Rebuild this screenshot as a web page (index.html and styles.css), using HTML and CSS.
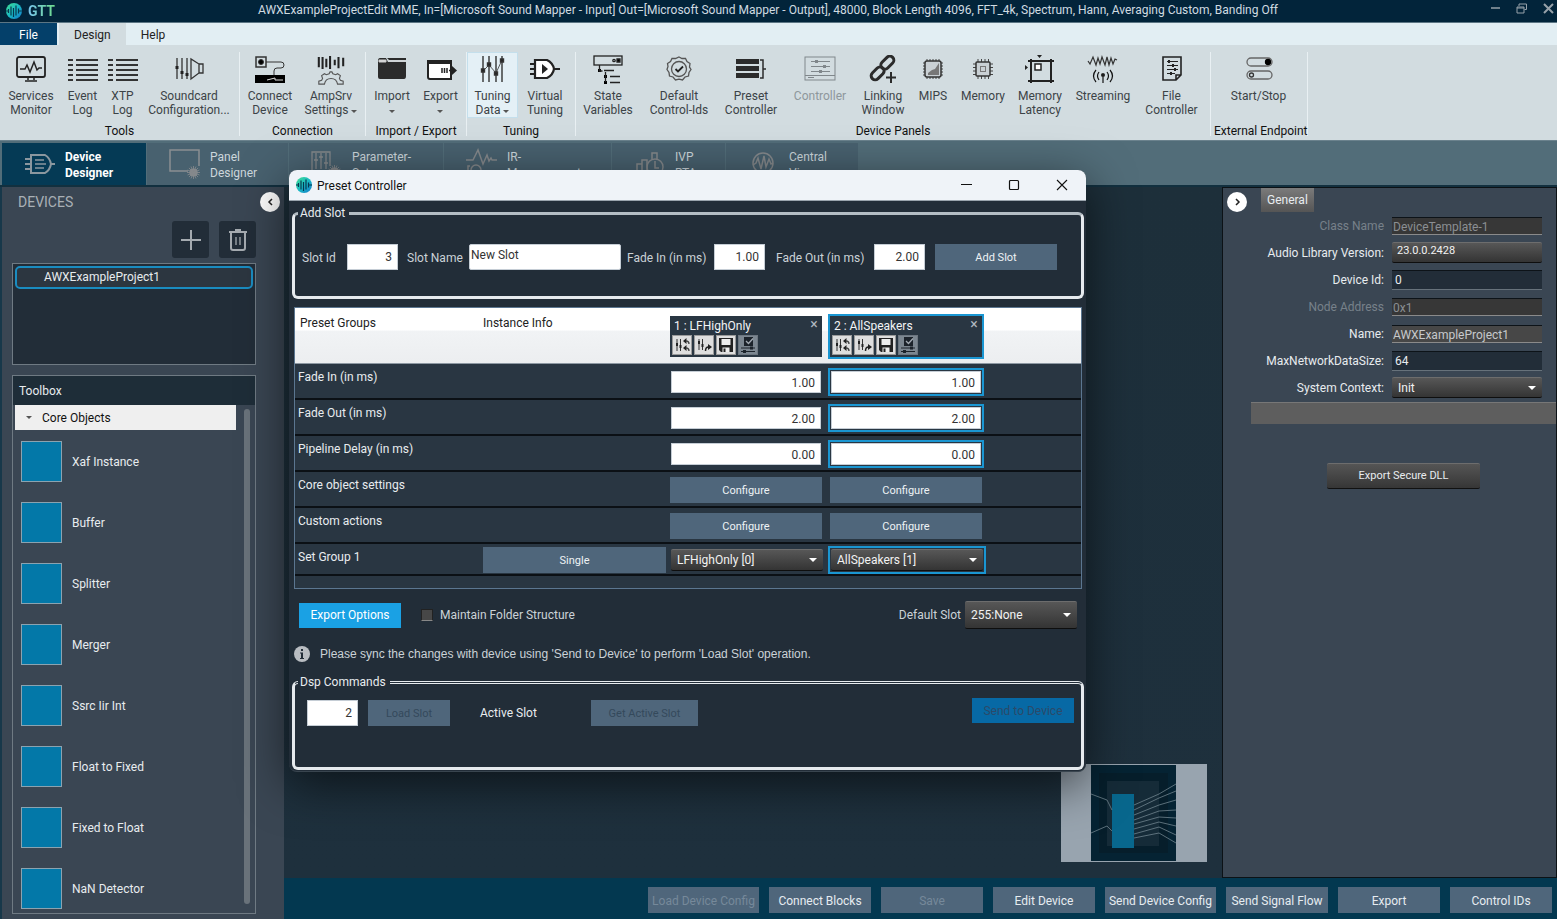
FILE: index.html
```
<!DOCTYPE html>
<html lang="en">
<head>
    <meta charset="UTF-8">
    <meta name="viewport" content="width=device-width, initial-scale=1.0">
    <title>GTT - Preset Controller</title>
    <link rel="stylesheet" href="styles.css">
</head>
<body>
    <!-- shared icons -->
    <svg class="defs" width="0" height="0" aria-hidden="true">
        <defs>
            <linearGradient id="logo-fill" x1="0" y1="0" x2="1" y2="1">
                <stop offset="0" stop-color="#43e08f"/>
                <stop offset="0.5" stop-color="#19b9c4"/>
                <stop offset="1" stop-color="#1277c8"/>
            </linearGradient>
            <symbol id="logo" viewBox="0 0 16 16">
                <circle cx="8" cy="8" r="8" fill="url(#logo-fill)"/>
                <path d="M0 8h2.5V6.500M2.500 6v4M5 3.500v9M7.500 5v9M10 2.500v10M12.500 5.500v5M13 8h3" fill="none" stroke="#06394f" stroke-width="1.200"/>
            </symbol>
            <symbol id="log" viewBox="0 0 32 28">
                <path d="M1 4h5M9 4h22M1 9h5M9 9h22M1 14h5M9 14h22M1 19h5M9 19h22M1 24h5M9 24h22" stroke="#333" stroke-width="1.800"/>
            </symbol>
            <symbol id="gear" viewBox="0 0 12 12">
                <circle cx="6" cy="6" r="3.800" fill="#85898c"/>
                <path d="M6 0v12M0 6h12M1.800 1.800l8.400 8.400M10.200 1.800l-8.400 8.400M3.700 .5l4.600 11M8.300 .5L3.700 11.500M.5 3.700l11 4.600M.5 8.300l11-4.600" stroke="#85898c" stroke-width=".8"/>
            </symbol>
            <symbol id="slot-revert" viewBox="0 0 16 16">
                <path d="M3 2v12M6.500 2v12" stroke="#333" stroke-width="1"/>
                <path d="M2 6h2v3H2zM5.500 8h2v3h-2z" fill="#222"/>
                <path d="M9 4l3.500-3v6zM9 11l3.500-3v6z" fill="#222"/>
                <path d="M12 4q3 0 3 3M12 11q3 0 3 3" fill="none" stroke="#444" stroke-width="1.300"/>
            </symbol>
            <symbol id="slot-apply" viewBox="0 0 16 16">
                <path d="M3 2v11M6.500 2v11" stroke="#333" stroke-width="1"/>
                <path d="M2 4h2v3H2zM5.500 7h2v3h-2z" fill="#222"/>
                <path d="M9.500 14q0-4 3-4" fill="none" stroke="#222" stroke-width="1.500"/>
                <path d="M12 7l4 3-4 3z" fill="#222"/>
            </symbol>
            <symbol id="slot-save" viewBox="0 0 16 16">
                <path d="M1 1h14v14H3l-2-2z" fill="#222"/>
                <path d="M3.500 2h9v6h-9z" fill="#eee"/>
                <path d="M4.500 10.500h7V15h-7z" fill="#eee"/>
                <path d="M5.500 11.500h2V15h-2z" fill="#222"/>
            </symbol>
            <symbol id="slot-check" viewBox="0 0 16 16">
                <path d="M4 0h9v9H4z" fill="#1c232b"/>
                <path d="M6 4l2.500 2.500L13 1.500" fill="none" stroke="#a3abb3" stroke-width="1.300"/>
                <path d="M1 11h14M1 14.500h14" stroke="#1c232b"/>
                <path d="M10 9.500h3v3h-3zM3 13h3v3H3z" fill="#1c232b"/>
            </symbol>
        </defs>
    </svg>

    <header class="titlebar">
        <div class="brand"><svg width="16" height="16"><use href="#logo"/></svg><span class="brand-name">GTT</span></div>
        <div class="titlebar-text">AWXExampleProjectEdit MME, In=[Microsoft Sound Mapper - Input] Out=[Microsoft Sound Mapper - Output], 48000, Block Length 4096, FFT_4k, Spectrum, Hann, Averaging Custom, Banding Off</div>
        <div class="app-controls">
            <button aria-label="Minimize"><svg width="10" height="10"><path d="M1 5h9" stroke="#96a1a9" stroke-width="1.500"/></svg></button>
            <button aria-label="Restore"><svg width="11" height="11" fill="none" stroke="#96a1a9"><path d="M3 3V1h7.500v5.500H8.500M1 4h7v6H1zM1 5h7"/></svg></button>
            <button aria-label="Close"><svg width="11" height="11"><path d="M1 1l9 9M10 1l-9 9" stroke="#96a1a9" stroke-width="2"/></svg></button>
        </div>
    </header>

    <nav class="menu">
        <button class="menu-file">File</button>
        <button class="menu-active">Design</button>
        <button>Help</button>
    </nav>

    <div class="ribbon">
        <section class="group tools">
            <div class="group-items">
                <button class="tool">
                    <svg width="32" height="28" fill="none" stroke="#222" stroke-width="1.800"><rect x="2" y="2" width="28" height="20" rx="2"/><path d="M5 14h5l2-4 3 7 4-10 3 8 2-2h3M13 22v3M19 22v3M10 26h12" stroke-width="1.500"/></svg>
                    <span>Services<br>Monitor</span>
                </button>
                <button class="tool"><svg width="32" height="28"><use href="#log"/></svg><span>Event<br>Log</span></button>
                <button class="tool"><svg width="32" height="28"><use href="#log"/></svg><span>XTP<br>Log</span></button>
                <button class="tool">
                    <svg width="32" height="28" fill="none" stroke="#333" stroke-width="1.300"><path d="M4 3v21M9 3v21M14 3v21M18 4v20l8-6V9zM26 9h4v9h-4"/><path d="M2.500 11h3v3h-3zM7.500 16h3v3h-3zM12.500 18h3v3h-3z" fill="#222" stroke="none"/></svg>
                    <span>Soundcard<br>Configuration...</span>
                </button>
            </div>
            <h2>Tools</h2>
        </section>
        <section class="group connection">
            <div class="group-items">
                <button class="tool">
                    <svg width="32" height="30" viewBox="0 0 32 30" fill="none" stroke="#333"><rect x="2" y="2" width="10" height="10" stroke-width="1.500"/><circle cx="7" cy="7" r="2.500" fill="#000"/><path d="M12 7h15q3 0 3 3t-3 3h-4q-3 0-3 3v4"/><path d="M1 20h30v8H1z" fill="#000" stroke="none"/><path d="M13 25l8-2v2h8" stroke="#ddd"/></svg>
                    <span>Connect<br>Device</span>
                </button>
                <button class="tool">
                    <svg width="32" height="32" viewBox="0 0 32 32" fill="none" stroke="#222"><path d="M3 2v11M7 2v13M11 4v9M15 1v14M20 5v6M24 2v12M29 3v9" stroke-width="2.200"/><path d="M3 31v-3l3-1 1-2-1-3 3-2 2 1 3-1 1-2h2l1 2 3 1 2-1 3 2-1 3 1 2 3 1v3h-6q-1-6-7-6t-7 6z" stroke="#555" stroke-width="1.200"/></svg>
                    <span>AmpSrv<br>Settings <i class="caret"></i></span>
                </button>
            </div>
            <h2>Connection</h2>
        </section>
        <section class="group io">
            <div class="group-items">
                <button class="tool">
                    <svg width="32" height="28"><path d="M3 3h8l2 2h17v-2H12M2 6q0-3 2-3h6l2 4h18v14q0 3-2 3H4q-2 0-2-2z" fill="#2b2b2b"/><path d="M3 5h7v2H3zM12 6h18" fill="#ddd" stroke="#ccc"/></svg>
                    <span>Import<br><i class="caret"></i></span>
                </button>
                <button class="tool">
                    <svg width="32" height="28"><path d="M3 6h23v18H5q-2 0-2-2z" fill="#fff" stroke="#222" stroke-width="2"/><path d="M2 5h25v4H2z" fill="#222"/><path d="M17 13v5M19.500 13v5M22 13v5M24 15.500h4" stroke="#222" stroke-width="1.500"/><path d="M27 11l5 4.500-5 4.500z" fill="#222"/></svg>
                    <span>Export<br><i class="caret"></i></span>
                </button>
            </div>
            <h2>Import / Export</h2>
        </section>
        <section class="group tuning">
            <div class="group-items">
                <button class="tool tool-active">
                    <svg width="32" height="28" stroke="#333" stroke-width="1.400"><path d="M6 1v26M12 1v26M19 1v26M25 1v26" fill="none"/><path d="M6 16l6-6 7 8 6-13" fill="none" stroke-width=".8"/><path d="M4.500 14h3v3h-3zM10.500 8h3v3h-3zM17.500 17h3v3h-3zM23.500 4h3v3h-3z" fill="#222"/></svg>
                    <span>Tuning<br>Data <i class="caret"></i></span>
                </button>
                <button class="tool">
                    <svg width="32" height="28" stroke="#222" stroke-width="2.200"><path d="M6 5h12q6 3 7 9-1 6-7 9H6z" fill="#fff"/><path d="M1 9h5M1 14h5M1 19h5M25 14h6" fill="none"/><path d="M13 9l6 5-6 5z" fill="#222" stroke="none"/></svg>
                    <span>Virtual<br>Tuning</span>
                </button>
            </div>
            <h2>Tuning</h2>
        </section>
        <section class="group panels">
            <div class="group-items">
                <button class="tool">
                    <svg width="32" height="30" viewBox="0 0 32 30" fill="none" stroke="#222" stroke-width="1.300"><rect x="2" y="1" width="28" height="9"/><circle cx="22" cy="5.500" r="1.200"/><path d="M25 4h3v3h-3z" fill="#000"/><path d="M6 14h3v3H6zM12 20h3v3h-3zM12 26h3v3h-3z" fill="#000" stroke="none"/><path d="M7.500 10v6h3M13.500 17v10M12 15.500h10M18 21.500h10M18 27.500h10"/></svg>
                    <span>State<br>Variables</span>
                </button>
                <button class="tool">
                    <svg width="32" height="28" fill="none" stroke="#555" stroke-width="1.300"><path d="M16 2l3 1.500 3.500 0 1.500 3 3 2-.500 3.500 1.500 2.500-2 3-.500 3.500-3.500 1-2.500 3-3.500-.800-3.500.800-2.500-3-3.500-1-.500-3.500-2-3L5 11.500 4.500 8.500l3-2 1.500-3 3.500 0z"/><circle cx="16" cy="14" r="7.500"/><path d="M12.500 14l2.500 2.500 5-5" stroke="#222" stroke-width="1.800"/></svg>
                    <span>Default<br>Control-Ids</span>
                </button>
                <button class="tool">
                    <svg width="32" height="28"><path d="M1 4h23v5H1zM1 11h23v5H1zM1 18h23v5H1z" fill="#2b2b2b"/><path d="M25 5h3v18h-3M28 14h3" fill="none" stroke="#2b2b2b" stroke-width="1.500"/></svg>
                    <span>Preset<br>Controller</span>
                </button>
                <button class="tool" disabled>
                    <svg width="32" height="28" fill="none" stroke="#80878b"><rect x="1" y="2" width="30" height="23"/><path d="M1 20.500h30M4 22.500h6M7 6.500h19M7 11.500h19M7 16.500h19"/><path d="M11 5h3v3h-3zM19 10h3v3h-3zM15 15h3v3h-3z" fill="#80878b" stroke="none"/></svg>
                    <span>Controller</span>
                </button>
                <button class="tool">
                    <svg width="32" height="28" fill="none" stroke="#2b2b2b" stroke-width="3"><rect x="13" y="4" width="15" height="8" rx="4" transform="rotate(-45 20 8)"/><rect x="3" y="14" width="15" height="8" rx="4" transform="rotate(-45 11 18)"/><path d="M24 17v11M19 22.500h10" stroke-width="2"/></svg>
                    <span>Linking<br>Window</span>
                </button>
                <button class="tool">
                    <svg width="32" height="28" fill="none" stroke="#444"><path d="M10 4v20M13 4v20M16 4v20M19 4v20M22 4v20M6 8h20M6 11h20M6 14h20M6 17h20M6 20h20"/><rect x="8" y="6" width="16" height="16" rx="2" fill="#c9d0d4" stroke="#333" stroke-width="1.500"/><path d="M11 20v-2l4-3 3-1 4-6v12z" fill="#777" stroke="none"/></svg>
                    <span>MIPS</span>
                </button>
                <button class="tool">
                    <svg width="32" height="28" fill="none" stroke="#444"><path d="M11 4v20M14.500 4v20M18 4v20M21.500 4v20M6 9h20M6 12.500h20M6 16h20M6 19.500h20"/><rect x="9" y="7" width="14" height="14" rx="1" fill="#c9d0d4" stroke="#333" stroke-width="1.500"/><rect x="13.500" y="11.500" width="5" height="5" stroke="#777"/></svg>
                    <span>Memory</span>
                </button>
                <button class="tool">
                    <svg width="32" height="30" viewBox="0 0 32 30" fill="none" stroke="#222" stroke-width="2"><path d="M7 4v24M27 4v24M4 6h26M4 26h26"/><rect x="11" y="9" width="6" height="6" fill="#fff" stroke-width="1.500"/><path d="M13 0h5l-2.500 3zM1 10v5l3-2.500z" fill="#222" stroke="none"/></svg>
                    <span>Memory<br>Latency</span>
                </button>
                <button class="tool">
                    <svg width="32" height="28" fill="none" stroke="#333" stroke-width="1.200"><path d="M1 6l2 3 3-7 3 8 2-7 2 6 2-7 3 8 2-8 2 8 2-7 2 6 2-5 2 1"/><path d="M9 15q-5 6 0 12M12 17q-3 4 0 8M23 15q5 6 0 12M20 17q3 4 0 8M16 21v7" stroke="#111"/><circle cx="16" cy="20" r="1.500" fill="#111"/></svg>
                    <span>Streaming</span>
                </button>
                <button class="tool">
                    <svg width="32" height="28" fill="none" stroke="#222" stroke-width="1.600"><path d="M7 2h18v18l-5 5H7zM25 20h-5v5"/><path d="M11 6.500h11M11 10.500h11M11 14.500h11M11 18.500h8" stroke-width="1"/><path d="M12 5h2v3h-2zM16 9h2v3h-2zM18 13h2v3h-2zM14 17h2v3h-2z" fill="#222" stroke="none"/></svg>
                    <span>File<br>Controller</span>
                </button>
            </div>
            <h2>Device Panels</h2>
        </section>
        <section class="group external">
            <div class="group-items">
                <button class="tool">
                    <svg width="32" height="28" fill="none" stroke="#666" stroke-width="1.300"><rect x="4" y="3" width="25" height="8" rx="4"/><rect x="4" y="16" width="25" height="8" rx="4"/><circle cx="25" cy="7" r="2.500" fill="#000" stroke="#000"/><circle cx="8.500" cy="20" r="2" stroke="#333"/></svg>
                    <span>Start/Stop</span>
                </button>
            </div>
            <h2>External Endpoint</h2>
        </section>
    </div>

    <nav class="modules">
        <button class="module module-active">
            <svg width="32" height="32" viewBox="0 -3 32 32" fill="none" stroke="#8b979f" stroke-width="2"><path d="M7 4h14q5 3 6 9-1 6-6 9H7zM1 8h6M1 13h6M1 18h6M27 13h4"/><path d="M11 9h9M11 13h11M11 17h9" stroke-width="1.500"/></svg>
            <span>Device<br>Designer</span>
        </button>
        <button class="module">
            <svg width="32" height="32"><path d="M19 23H1V2h29v16" fill="none" stroke="#8a8f92" stroke-width="1.500"/><use href="#gear" x="18" y="18" width="13" height="13"/></svg>
            <span>Panel<br>Designer</span>
        </button>
        <button class="module">
            <svg width="32" height="32"><path d="M1 22V4h18v14M5 5v16M10 5v16M15 5v16M3 12h4M8 9h4M13 15h4" fill="none" stroke="#85898c" stroke-width="1.300"/><use href="#gear" x="17" y="17" width="13" height="13"/></svg>
            <span>Parameter-<br>Set</span>
        </button>
        <button class="module">
            <svg width="32" height="32" viewBox="1 0 32 32" fill="none" stroke="#85898c" stroke-width="1.500"><path d="M0 12h8l5-10 5 14 4-9 2 6 2-3 1 2h5"/><circle cx="11" cy="22" r="5"/><path d="M3 28V18h2"/></svg>
            <span>IR-<br>Measurement</span>
        </button>
        <button class="module">
            <svg width="32" height="32" fill="none" stroke="#85898c" stroke-width="1.500"><path d="M3 28V16h5v12M8 20v-8h5v14M18 11V5h5v6"/><circle cx="21" cy="19" r="8"/><path d="M21 13v7h4"/></svg>
            <span>IVP<br>RTA</span>
        </button>
        <button class="module">
            <svg width="32" height="32" viewBox="-4 0 32 32" fill="none" stroke="#85898c" stroke-width="1.500"><circle cx="11" cy="15" r="10"/><path d="M1 17l3-2 2-5 3 11 3-13 2 11 3-8 2 5 2-1"/></svg>
            <span>Central<br>Viewer</span>
        </button>
    </nav>

    <div class="workspace">
        <aside class="sidebar">
            <div class="sidebar-head">
                <h2>DEVICES</h2>
                <button class="circle-btn" aria-label="Collapse"><svg width="8" height="8"><path d="M6 1L3 4l3 3" fill="none" stroke="#222" stroke-width="1.500"/></svg></button>
            </div>
            <div class="sidebar-actions">
                <button aria-label="Add device"><svg width="22" height="22"><path d="M11 1v20M1 11h20" stroke="#a5abb0" stroke-width="2"/></svg></button>
                <button aria-label="Delete device"><svg width="20" height="24" fill="none" stroke="#a5abb0" stroke-width="2"><path d="M1 4h18M7 2h6M3 4v16q0 2 2 2h10q2 0 2-2V4"/><path d="M8 9v8M12 9v8" stroke-width="1.300"/></svg></button>
            </div>
            <ul class="device-list">
                <li>AWXExampleProject1</li>
            </ul>
            <section class="toolbox">
                <h3>Toolbox</h3>
                <div class="toolbox-body">
                    <div class="toolbox-main">
                        <button class="toolbox-group"><i class="caret"></i>Core Objects</button>
                        <ul class="toolbox-items">
                            <li><i></i>Xaf Instance</li>
                            <li><i></i>Buffer</li>
                            <li><i></i>Splitter</li>
                            <li><i></i>Merger</li>
                            <li><i></i>Ssrc Iir Int</li>
                            <li><i></i>Float to Fixed</li>
                            <li><i></i>Fixed to Float</li>
                            <li><i></i>NaN Detector</li>
                        </ul>
                    </div>
                    <div class="scroll-thumb"></div>
                </div>
            </section>
        </aside>

        <div class="center">
            <div class="center-top">
                <main class="canvas">
                    <svg class="minimap" width="146" height="98">
                        <rect width="146" height="98" fill="#98a4af"/>
                        <rect x="30" y="1" width="85" height="96" fill="#052333"/>
                        <rect x="38" y="9" width="69" height="80" fill="#061e2b"/>
                        <rect x="46" y="17" width="52" height="65" fill="#152b38"/>
                        <rect x="51" y="30" width="22" height="54" fill="#08678d"/>
                        <path d="M30 30l16 6 5 10M30 69l16-7 5 5M73 41l25-11 17-10M73 46l25-12 17-7M73 51l25-10 17-5M73 56l25-9 17-1M73 60l25-7 17 1M73 65l25-7 17 4M73 70l25-7 17 8M73 74l25-5 17 10" fill="none" stroke="#6f838d" stroke-width=".8"/>
                    </svg>
                </main>
                <aside class="properties">
                    <div class="properties-tabs">
                        <button class="circle-btn" aria-label="Expand"><svg width="8" height="8"><path d="M3 1l3 3-3 3" fill="none" stroke="#222" stroke-width="1.500"/></svg></button>
                        <button class="tab">General</button>
                    </div>
                    <form class="properties-form">
                        <label class="dim" for="class-name">Class Name</label>
                        <input class="readonly dim" id="class-name" value="DeviceTemplate-1" disabled>
                        <label for="lib-version">Audio Library Version:</label>
                        <span class="select small no-arrow"><select id="lib-version"><option>23.0.0.2428</option></select></span>
                        <label for="device-id">Device Id:</label>
                        <input id="device-id" value="0">
                        <label class="dim" for="node-address">Node Address</label>
                        <input class="readonly dim" id="node-address" value="0x1" disabled>
                        <label for="name">Name:</label>
                        <input class="readonly" id="name" value="AWXExampleProject1" readonly>
                        <label for="max-size">MaxNetworkDataSize:</label>
                        <input id="max-size" value="64">
                        <label for="context">System Context:</label>
                        <span class="select"><select id="context"><option>Init</option></select></span>
                    </form>
                    <div class="properties-bar"></div>
                    <button class="dark-btn">Export Secure DLL</button>
                </aside>
            </div>
            <footer class="actions">
                <button class="wide" disabled>Load Device Config</button>
                <button>Connect Blocks</button>
                <button disabled>Save</button>
                <button>Edit Device</button>
                <button class="wide">Send Device Config</button>
                <button>Send Signal Flow</button>
                <button>Export</button>
                <button>Control IDs</button>
            </footer>
        </div>
    </div>

    <div class="dialog" role="dialog" aria-label="Preset Controller">
        <div class="dialog-title">
            <svg width="16" height="16"><use href="#logo"/></svg>
            <h1>Preset Controller</h1>
            <div class="dialog-controls">
                <button aria-label="Minimize"><svg width="12" height="12"><path d="M1 5.500h11" stroke="#111"/></svg></button>
                <button aria-label="Maximize"><svg width="12" height="12"><rect x="1.500" y="1.500" width="9" height="9" rx="1" fill="none" stroke="#111" stroke-width="1.200"/></svg></button>
                <button aria-label="Close"><svg width="12" height="12"><path d="M1 1l10 10M11 1L1 11" stroke="#111" stroke-width="1.100"/></svg></button>
            </div>
        </div>
        <div class="dialog-body">
            <fieldset class="add-slot">
                <legend>Add Slot</legend>
                <div class="add-slot-row">
                    <label for="slot-id">Slot Id</label>
                    <input class="num" id="slot-id" value="3">
                    <label for="slot-name">Slot Name</label>
                    <input class="text" id="slot-name" value="New Slot">
                    <label for="fade-in">Fade In (in ms)</label>
                    <input class="num" id="fade-in" value="1.00">
                    <label for="fade-out">Fade Out (in ms)</label>
                    <input class="num" id="fade-out" value="2.00">
                    <button class="btn">Add Slot</button>
                </div>
            </fieldset>

            <div class="preset-box">
                <table class="presets">
                    <colgroup><col class="col-group"><col class="col-info"><col class="col-slot"><col class="col-slot"><col></colgroup>
                    <thead>
                        <tr>
                            <th>Preset Groups</th>
                            <th class="info">Instance Info</th>
                            <th>
                                <div class="card">
                                    <div class="card-title">1 : LFHighOnly<button aria-label="Remove slot 1">×</button></div>
                                    <div class="card-icons">
                                        <button aria-label="Revert"><svg width="16" height="16"><use href="#slot-revert"/></svg></button>
                                        <button aria-label="Apply"><svg width="16" height="16"><use href="#slot-apply"/></svg></button>
                                        <button aria-label="Save"><svg width="16" height="16"><use href="#slot-save"/></svg></button>
                                        <button class="off" aria-label="Select"><svg width="16" height="16"><use href="#slot-check"/></svg></button>
                                    </div>
                                </div>
                            </th>
                            <th>
                                <div class="card selected">
                                    <div class="card-title">2 : AllSpeakers<button aria-label="Remove slot 2">×</button></div>
                                    <div class="card-icons">
                                        <button aria-label="Revert"><svg width="16" height="16"><use href="#slot-revert"/></svg></button>
                                        <button aria-label="Apply"><svg width="16" height="16"><use href="#slot-apply"/></svg></button>
                                        <button aria-label="Save"><svg width="16" height="16"><use href="#slot-save"/></svg></button>
                                        <button class="off" aria-label="Select"><svg width="16" height="16"><use href="#slot-check"/></svg></button>
                                    </div>
                                </div>
                            </th>
                            <th></th>
                        </tr>
                    </thead>
                    <tbody>
                        <tr>
                            <td>Fade In (in ms)</td><td></td>
                            <td><div class="frame"><input aria-label="Fade In, slot 1" value="1.00"></div></td>
                            <td><div class="frame selected"><input aria-label="Fade In, slot 2" value="1.00"></div></td>
                            <td></td>
                        </tr>
                        <tr>
                            <td>Fade Out (in ms)</td><td></td>
                            <td><div class="frame"><input aria-label="Fade Out, slot 1" value="2.00"></div></td>
                            <td><div class="frame selected"><input aria-label="Fade Out, slot 2" value="2.00"></div></td>
                            <td></td>
                        </tr>
                        <tr>
                            <td>Pipeline Delay (in ms)</td><td></td>
                            <td><div class="frame"><input aria-label="Pipeline Delay, slot 1" value="0.00"></div></td>
                            <td><div class="frame selected"><input aria-label="Pipeline Delay, slot 2" value="0.00"></div></td>
                            <td></td>
                        </tr>
                        <tr>
                            <td>Core object settings</td><td></td>
                            <td><button class="btn configure">Configure</button></td>
                            <td><button class="btn configure">Configure</button></td>
                            <td></td>
                        </tr>
                        <tr>
                            <td>Custom actions</td><td></td>
                            <td><button class="btn configure">Configure</button></td>
                            <td><button class="btn configure">Configure</button></td>
                            <td></td>
                        </tr>
                        <tr class="set-group">
                            <td>Set Group 1</td>
                            <td><button class="btn single">Single</button></td>
                            <td><div class="frame"><span class="select"><select aria-label="Set Group 1, slot 1"><option>LFHighOnly [0]</option></select></span></div></td>
                            <td><div class="frame selected"><span class="select"><select aria-label="Set Group 1, slot 2"><option>AllSpeakers [1]</option></select></span></div></td>
                            <td></td>
                        </tr>
                    </tbody>
                </table>
            </div>

            <div class="options-row">
                <button class="primary">Export Options</button>
                <label class="check"><input type="checkbox">Maintain Folder Structure</label>
                <label class="default-label" for="default-slot">Default Slot</label>
                <span class="select tall"><select id="default-slot"><option>255:None</option></select></span>
            </div>

            <p class="hint">
                <svg width="16" height="16"><circle cx="8" cy="8" r="8" fill="#b9bdc2"/><path d="M7 3h2v2H7zM6 6.500h3V12h1v1H6v-1h1V7.500H6z" fill="#222d38"/></svg>
                Please sync the changes with device using 'Send to Device' to perform 'Load Slot' operation.
            </p>

            <fieldset class="dsp">
                <legend>Dsp Commands</legend>
                <div class="dsp-row">
                    <input class="num" aria-label="Slot to load" value="2">
                    <button class="btn load" disabled>Load Slot</button>
                    <span class="active-slot">Active Slot</span>
                    <button class="btn get" disabled>Get Active Slot</button>
                    <button class="primary" disabled>Send to Device</button>
                </div>
            </fieldset>
        </div>
    </div>
</body>
</html>
```

FILE: styles.css
```
* { box-sizing: border-box; }
body {
    margin: 0;
    padding: 0 1px 1px 0;
    min-height: 100vh;
    display: flex;
    flex-direction: column;
    position: relative;
    background: #fff;
    color: #e8ecef;
    font-family: Roboto, "Open Sans", sans-serif;
    font-size: 12px;
    line-height: 14px;
}
h1, h2, h3, p, ul { margin: 0; padding: 0; font-size: 12px; font-weight: normal; }
ul { list-style: none; }
button, input, select { font: inherit; color: inherit; border: none; border-radius: 0; padding: 0; margin: 0; background: none; }
svg { display: block; flex: none; }
.defs { position: absolute; }

/* title bar and menu */
.titlebar { height: 23px; display: flex; align-items: center; background: #02243a; border-bottom: 1px solid #5c7684; }
.brand { display: flex; align-items: center; gap: 6px; width: 258px; padding-left: 6px; }
.brand-name {
    font-size: 14px;
    font-weight: bold;
    background: linear-gradient(90deg, #79c4ee, #6edc8c);
    -webkit-background-clip: text;
    background-clip: text;
    color: transparent;
}
.titlebar-text { flex: 1; white-space: nowrap; color: #d0dbe1; padding-bottom: 2px; }
.app-controls { display: flex; gap: 16px; padding: 0 3px 6px 0; }

.menu { height: 22px; display: flex; background: #e2eef3; color: #222; }
.menu button { padding: 2px 15px 0; }
.menu .menu-file { width: 57px; background: #04406a; color: #fff; margin-right: 2px; }
.menu .menu-active { background: #d2dce0; }

/* ribbon */
.ribbon { height: 96px; display: flex; background: #d2dce0; border-bottom: 1px solid #6b828d; color: #111; }
.group { display: flex; flex-direction: column; justify-content: space-between; margin: 7px 0 4px; border-right: 1px solid #e9f0f3; padding-right: 3px; }
.group h2 { text-align: center; white-space: nowrap; padding-left: 3px; margin-bottom: -2px; }
.group-items { display: grid; }
.tools .group-items { grid-template-columns: 62px 41px 39px 94px; }
.connection .group-items { grid-template-columns: 60px 62px; }
.io .group-items { grid-template-columns: 52px 45px; }
.tuning .group-items { grid-template-columns: 51px 54px; }
.panels .group-items { grid-template-columns: 64px 78px 66px 72px 54px 46px 54px 60px 66px 71px; }
.external { padding-right: 0; }
.external .group-items { grid-template-columns: 95px; }
.tool { height: 66px; display: flex; flex-direction: column; align-items: center; color: #3c4347; white-space: nowrap; }
.tool svg { margin: 3px 0 2px; height: 30px; }
.tool span { margin-top: 2px; }
.tool:disabled { color: #8e979c; }
.tool-active { background: #e4f0f6; border: 1px solid #c4dfec; }
.tool-active svg { margin-top: 2px; }
.caret { display: inline-block; border: 3px solid transparent; border-top-color: #555; border-bottom: none; vertical-align: 1px; }

/* module tabs */
.modules {
    height: 44px;
    display: grid;
    grid-template-columns: 146px 142px 155px 168px 114px 133px;
    padding-top: 2px;
    background: #526d79;
}
.module { display: flex; align-items: flex-start; gap: 9px; padding: 5px 0 0 22px; background: #48616f; border-left: 1px solid #526d79; color: #cdd7dc; text-align: left; line-height: 16px; overflow: hidden; }
.module span { padding-top: 1px; }
.module-active { background: #053a55; border-left-width: 2px; color: #fff; font-weight: bold; }

.workspace { flex: 1; display: flex; background: #053850; border-top: 2px solid #12303f; }

/* devices and toolbox */
.sidebar { width: 284px; display: flex; flex-direction: column; background: #3a4653; border-left: 2px solid #17384a; padding: 0 28px 5px 10px; }
.sidebar-head { display: flex; justify-content: space-between; align-items: center; height: 30px; margin-right: -24px; padding-left: 6px; }
.sidebar-head h2 { font-size: 14px; color: #a9b0b6; }
.circle-btn { width: 20px; height: 20px; border-radius: 50%; background: #fff; display: grid; place-items: center; }
.sidebar-actions { display: flex; justify-content: flex-end; gap: 10px; margin: 4px 0 5px; }
.sidebar-actions button { width: 37px; height: 37px; border-radius: 3px; background: #222d38; display: grid; place-items: center; }
.device-list { height: 102px; border: 1px solid #6f7a83; background: #222d38; padding: 2px; }
.device-list li { height: 23px; line-height: 19px; border: 2px solid #1a8cc0; border-radius: 5px; padding-left: 27px; background: #2c3640; }
.toolbox { flex: 1; display: flex; flex-direction: column; margin-top: 10px; border: 1px solid #6f7a83; }
.toolbox h3 { line-height: 28px; background: #1e2d38; padding: 1px 6px 0; }
.toolbox-body { flex: 1; display: flex; justify-content: space-between; padding: 0 5px 0 2px; }
.toolbox-main { width: 221px; }
.toolbox-group { display: flex; align-items: center; gap: 10px; width: 100%; height: 25px; padding-left: 11px; background: #efefef; color: #111; }
.toolbox-items { padding: 11px 6px 0; display: flex; flex-direction: column; gap: 20px; }
.toolbox-items li { display: flex; align-items: center; gap: 10px; }
.toolbox-items i { width: 41px; height: 41px; background: #0378a8; border: 1px solid #8ba3b0; }
.scroll-thumb { width: 6px; margin: 4px 0 9px; border-radius: 3px; background: #69727a; }

/* canvas and properties */
.center { flex: 1; min-width: 0; display: flex; flex-direction: column; }
.center-top { flex: 1; display: flex; }
.canvas { flex: 1; position: relative; background: linear-gradient(#1d2f3a, #1e303d); }
.minimap { position: absolute; right: 15px; bottom: 16px; }
.properties { width: 335px; background: #3a4653; border: 1px solid #0c1216; }
.properties-tabs { display: flex; align-items: flex-start; gap: 14px; height: 24px; padding-left: 4px; }
.properties-tabs .circle-btn { margin-top: 4px; }
.tab { height: 24px; padding: 0 6px; background: linear-gradient(#7b7b7b, #555); }
.properties-form { display: grid; grid-template-columns: 161px 150px; grid-auto-rows: 27px; align-items: center; column-gap: 8px; }
.properties-form label { text-align: right; }
.properties-form input { width: 150px; height: 20px; padding: 0 3px; background: #222d38; border-top: 1px solid #0d1318; border-bottom: 1px solid #67727b; }
.properties-form .readonly { height: 18px; padding: 2px 1px 0; background: #474747; border-bottom-color: #8a8a8a; color: #c6c9cc; }
.properties-form .readonly.dim { background: #373737; color: #8b8f93; }
label.dim { color: #77818a; }
.properties-bar { height: 22px; margin: 1px 0 39px 28px; background: #5e5e5e; border-top: 1px solid #777; }
.dark-btn { display: block; width: 153px; height: 26px; margin-left: 104px; font-size: 11px; border-radius: 2px; background: linear-gradient(#555, #363636); border-top: 1px solid #6d6d6d; border-bottom: 1px solid #111; }

.select { position: relative; display: block; height: 21px; }
.select select { appearance: none; width: 100%; height: 100%; padding: 0 6px; color: #f2f2f2; border-radius: 2px; background: linear-gradient(#575757, #343434); border-top: 1px solid #6d6d6d; border-bottom: 1px solid #0e0e0e; }
.select::after { content: ""; position: absolute; right: 6px; top: 50%; margin-top: -2px; border: 4px solid transparent; border-top-color: #fff; border-bottom: none; }
.select.small { font-size: 11px; }
.select.small select { padding: 0 5px 3px; }
.select.no-arrow::after { display: none; }
.select.tall { width: 112px; height: 28px; }

.actions { height: 41px; display: flex; justify-content: flex-end; gap: 10px; padding: 9px 5px 6px 0; background: #033850; }
.actions button { width: 102px; padding-top: 2px; background: #4f667b; color: #e6ecf1; white-space: nowrap; }
.actions .wide { width: 111px; }
.actions button:disabled { color: #76899a; }

/* preset controller window */
.dialog { position: absolute; left: 289px; top: 170px; width: 797px; border-radius: 8px; overflow: hidden; background: #222d38; border-bottom: 1px solid #39454f; box-shadow: 0 12px 48px rgba(0,0,0,0.6); }
.dialog-title { height: 31px; display: flex; align-items: center; gap: 5px; padding-left: 7px; background: #eff3f8; color: #111; border-bottom: 1px solid #9aa4ad; }
.dialog-title h1 { padding-top: 1px; }
.dialog-controls { margin-left: auto; display: flex; gap: 36px; padding-right: 18px; }
.dialog-body { padding: 5px 2px 1px 3px; }
fieldset { min-width: 0; margin: 0; border: 3px solid #e6eaee; border-radius: 6px; padding: 0 3px; }
legend { padding: 0 4px 0 2px; }
.add-slot { height: 93px; border-top-color: #b4bdc4; }
.add-slot-row { display: grid; grid-template-columns: 45px 60px 62px 158px 87px 62px 98px 61px 122px; align-items: center; padding: 24px 0 0 4px; color: #cbd2d7; }
.add-slot-row label { padding-top: 2px; }
.num, .text { height: 26px; background: #fff; color: #333; border: 1px solid #c5cdd5; }
.num { width: 51px; text-align: right; padding: 0 5px; }
.text { width: 152px; padding: 0 1px 5px; border-radius: 2px; }
.btn { height: 26px; padding-top: 2px; background: #4f667b; color: #eef2f5; font-size: 11px; }
.btn:disabled { color: #34495b; }

.preset-box { margin: 8px 2px 0; border: 1px solid #5b7690; background: #293642; padding-bottom: 12px; }
.presets { width: 100%; table-layout: fixed; border-collapse: separate; border-spacing: 0; }
.col-group { width: 188px; }
.col-info { width: 185px; }
.col-slot { width: 160px; }
.presets th { height: 56px; padding: 6px 0 0; vertical-align: top; text-align: left; font-weight: normal; color: #222; background: linear-gradient(#fff 40%, #f1f3f5 42%, #eceef0); border-bottom: 1px solid #8d98a2; }
.presets th:first-child { padding-left: 5px; }
.presets th:first-child, .presets th.info { padding-top: 8px; }
.presets td { height: 36px; padding: 4px 0 0; vertical-align: top; border-bottom: 2px solid #0b1015; }
.presets td:first-child { padding: 6px 0 0 3px; }
.frame { width: 156px; border: 2px solid transparent; padding: 1px; }
.frame.selected { border-color: #1a96d2; }
.frame input { display: block; width: 100%; height: 22px; background: #fff; color: #333; border: 1px solid #c5cdd5; text-align: right; padding: 2px 5px 0; }
.card { width: 156px; border: 2px solid transparent; background: #293642 padding-box; color: #f2f4f6; padding: 2px; }
.card.selected { border-color: #1a96d2; }
.card-title { display: flex; justify-content: space-between; padding-left: 2px; line-height: 16px; }
.card-title button { width: 12px; height: 12px; line-height: 12px; font-size: 14px; color: #b0b8bf; }
.card-icons { display: flex; gap: 2px; margin-top: 1px; }
.card-icons button { width: 20px; height: 20px; padding: 1px; background: #dedede; border: 1px solid #9a9a9a; }
.card-icons .off { background: #7c8791; border-color: #6c7680; }
.configure { display: block; width: 152px; margin: 1px 0 0 2px; }
.presets .set-group td { height: 32px; padding-top: 2px; }
.presets .set-group td:first-child { padding-top: 6px; }
.set-group .frame { width: 158px; }
.set-group .select { height: 22px; }
.single { display: block; width: 183px; margin-top: 1px; }

.options-row { display: flex; align-items: center; padding: 12px 7px 0; color: #cbd2d7; }
.primary { width: 102px; height: 25px; background: #1aa1e4; color: #fff; }
.primary:disabled { background: #0769a5; color: #2b4a69; }
.check { display: flex; align-items: center; gap: 7px; margin-left: 20px; }
.check input { appearance: none; width: 12px; height: 12px; background: #474747; border: 1px solid #222; border-bottom-color: #888; }
.default-label { margin: 0 4px 0 auto; }
.hint { display: flex; align-items: center; gap: 10px; margin: 17px 0 13px 2px; font-family: "Liberation Sans", Arial, sans-serif; color: #cbd2d7; }
.dsp { height: 95px; border-top-style: double; }
.dsp-row { display: flex; align-items: flex-start; padding: 9px 4px 0 9px; }
.dsp-row .btn, .dsp-row .num { margin-top: 2px; }
.load { width: 82px; margin-left: 10px; }
.active-slot { width: 111px; margin: 8px 0 0 30px; }
.get { width: 107px; }
.dsp-row .primary { margin-left: auto; }
```
